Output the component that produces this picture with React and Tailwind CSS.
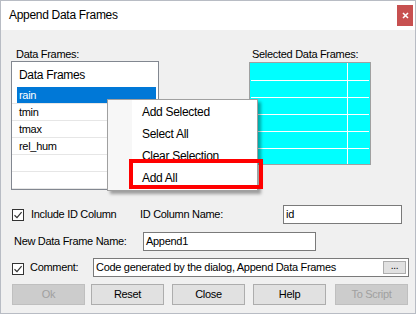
import React from "react";

const F = { fontFamily: '"Liberation Sans", Arial, sans-serif' };

function Check() {
  return (
    <div className="w-[12px] h-[12px] border border-[#333333] bg-white flex items-center justify-center">
      <svg width="10" height="10" viewBox="0 0 10 10">
        <path d="M1.5 5.2 L4 7.6 L8.6 2.2" fill="none" stroke="#333333" strokeWidth="1.2" />
      </svg>
    </div>
  );
}

function Btn({ children, disabled, className = "" }) {
  return (
    <div
      className={
        "w-[73px] h-[21px] flex items-center justify-center border text-[11px] tracking-[-0.3px] " +
        (disabled
          ? "bg-[#cccccc] border-[#bfbfbf] text-[#a0a0a0] "
          : "bg-[#e1e1e1] border-[#adadad] text-black ") +
        className
      }
    >
      {children}
    </div>
  );
}

export default function App() {
  const rows = ["rain", "tmin", "tmax", "rel_hum", "", ""];
  return (
    <div className="w-[418px] h-[318px] bg-white relative overflow-hidden" style={F}>
      <div className="w-[416px] h-[314px] border border-[#b8bcc4] flex flex-col bg-[#f0f0f0]">
        {/* Title bar */}
        <div className="h-[29px] bg-white flex items-start justify-between">
          <div className="pl-[8px] pt-[7px] text-[12px] tracking-[-0.3px] text-black leading-[15px]">
            Append Data Frames
          </div>
          <div className="mt-[4px] mr-[2px] w-[16px] h-[21px] bg-[#c75050] flex items-center justify-center">
            <svg width="7" height="7" viewBox="0 0 7 7">
              <path d="M1 1 L6 6 M6 1 L1 6" stroke="#ffffff" strokeWidth="1.6" />
            </svg>
          </div>
        </div>

        {/* Body */}
        <div className="flex flex-col pl-[10px] pt-[18px] text-black text-[11px] tracking-[-0.3px]">
          <div className="flex">
            {/* Left column */}
            <div className="flex flex-col w-[148px]">
              <div className="h-[13px] leading-[13px] pl-[5px]">Data Frames:</div>
              <div className="h-[129px] border border-[#828790] bg-white flex flex-col">
                <div className="h-[25px] flex items-center pl-[7px] text-[12px] tracking-[-0.3px]">Data Frames</div>
                {rows.map((r, i) => (
                  <div key={i} className="h-[17px] flex border-b border-[#e6e6e6]">
                    <div className="w-[5px]" />
                    <div
                      className={
                        "flex-1 mr-[2px] flex items-center pl-[2px] text-[11px] " +
                        (i === 0 ? "bg-[#0078d7] text-white" : "")
                      }
                    >
                      {r}
                    </div>
                  </div>
                ))}
              </div>
            </div>
            {/* Right column */}
            <div className="flex flex-col ml-[90px]">
              <div className="h-[13px] leading-[13px] pl-[3px]">Selected Data Frames:</div>
              <div className="mt-[1px] w-[122px] h-[103px] border border-[#a0a0a0] bg-[#00ffff] flex flex-col px-[1px]">
                {[18, 17, 17, 17, 17, 15].map((h, i) => (
                  <div
                    key={i}
                    className={"flex " + (i < 5 ? "border-b border-white" : "")}
                    style={{ height: h }}
                  >
                    <div className="w-[97px] border-r border-white" />
                    <div className="flex-1" />
                  </div>
                ))}
              </div>
            </div>
          </div>

          {/* Include ID row */}
          <div className="flex items-center h-[19px] mt-[15px]">
            <div className="ml-[1px]"><Check /></div>
            <div className="ml-[7px] w-[109px]">Include ID Column</div>
            <div className="w-[143px]">ID Column Name:</div>
            <div className="w-[119px] h-[19px] border border-[#7a7a7a] bg-white flex items-center pl-[2px]">id</div>
          </div>

          {/* New Data Frame Name row */}
          <div className="flex items-center h-[19px] mt-[8px]">
            <div className="ml-[3px] w-[129px]">New Data Frame Name:</div>
            <div className="w-[173px] h-[19px] border border-[#7a7a7a] bg-white flex items-center pl-[2px]">Append1</div>
          </div>

          {/* Comment row */}
          <div className="flex items-center h-[19px] mt-[7px]">
            <div className="ml-[1px] mt-[3px]"><Check /></div>
            <div className="ml-[6px] w-[63px]">Comment:</div>
            <div className="w-[316px] h-[19px] border border-[#7a7a7a] bg-white flex items-center pl-[2px] justify-between">
              <span>Code generated by the dialog, Append Data Frames</span>
              <div className="mr-[2px] w-[23px] h-[13px] bg-[#e1e1e1] border border-[#adadad] flex items-center justify-center text-[10px] leading-[8px] pb-[3px]">...</div>
            </div>
          </div>

          {/* Buttons */}
          <div className="flex mt-[7px]">
            <Btn disabled className="ml-[1px]">Ok</Btn>
            <Btn className="ml-[6px]">Reset</Btn>
            <Btn className="ml-[8px]">Close</Btn>
            <Btn className="ml-[8px]">Help</Btn>
            <Btn disabled className="ml-[9px]">To Script</Btn>
          </div>
        </div>
      </div>

      {/* Context menu */}
      <div className="absolute left-[107px] top-[99px] w-[151px] h-[92px] bg-white border border-[#a0a0a0] shadow-[3px_3px_3px_rgba(0,0,0,0.35)] flex">
        <div className="w-[24px] bg-[#f7f7f7]" />
        <div className="flex flex-col pt-[1px] text-[12px] tracking-[-0.3px] text-black">
          {["Add Selected", "Select All", "Clear Selection", "Add All"].map((t) => (
            <div key={t} className="h-[22px] flex items-center pl-[10px]">{t}</div>
          ))}
        </div>
      </div>

      {/* Red highlight */}
      <div className="absolute left-[129px] top-[159px] w-[134px] h-[30px] border-[4px] border-[#ff0000]" />
    </div>
  );
}
